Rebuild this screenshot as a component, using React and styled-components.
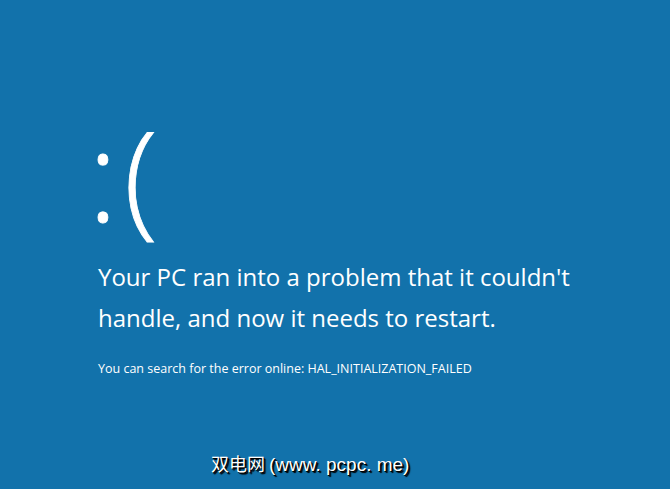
import React from "react";
import styled, { createGlobalStyle } from "styled-components";

const GlobalStyle = createGlobalStyle`
  html, body {
    margin: 0;
    padding: 0;
    background: #1272ab;
  }
`;

const Screen = styled.div`
  width: 670px;
  height: 489px;
  background: #1272ab;
  color: #fff;
  font-family: "Open Sans", "Noto Sans", sans-serif;
  display: flex;
  flex-direction: column;
  padding: 111px 0 0 88px;
  box-sizing: border-box;
  overflow: hidden;
`;

const Face = styled.div`
  font-size: 125px;
  font-weight: 300;
  line-height: 1;
  height: 138px;
  letter-spacing: 6px;
  -webkit-text-stroke: 0.8px #fff;
`;

const Message = styled.p`
  margin: 7px 0 0 10px;
  font-size: 24px;
  font-weight: 400;
  line-height: 41px;
  width: 520px;
`;

const Detail = styled.p`
  margin: 23px 0 0 10px;
  font-size: 12.5px;
  line-height: 16px;
`;

const Watermark = styled.div`
  margin-top: auto;
  margin-bottom: 13px;
  align-self: flex-start;
  margin-left: 123px;
  font-family: "Liberation Sans", "Noto Sans CJK SC", sans-serif;
  font-size: 19px;
  line-height: 22px;
  text-shadow: 1px 1px 0 #000, 2px 2px 1px #000;

  & span {
    font-family: "Noto Sans CJK SC", sans-serif;
    font-size: 18px;
    margin-right: 4px;
  }
`;

export default function App() {
  return (
    <>
      <GlobalStyle />
      <Screen>
        <Face>:(</Face>
        <Message>
          Your PC ran into a problem that it couldn't handle, and now it needs
          to restart.
        </Message>
        <Detail>
          You can search for the error online: HAL_INITIALIZATION_FAILED
        </Detail>
        <Watermark>
          <span>双电网</span>(www. pcpc. me)
        </Watermark>
      </Screen>
    </>
  );
}
